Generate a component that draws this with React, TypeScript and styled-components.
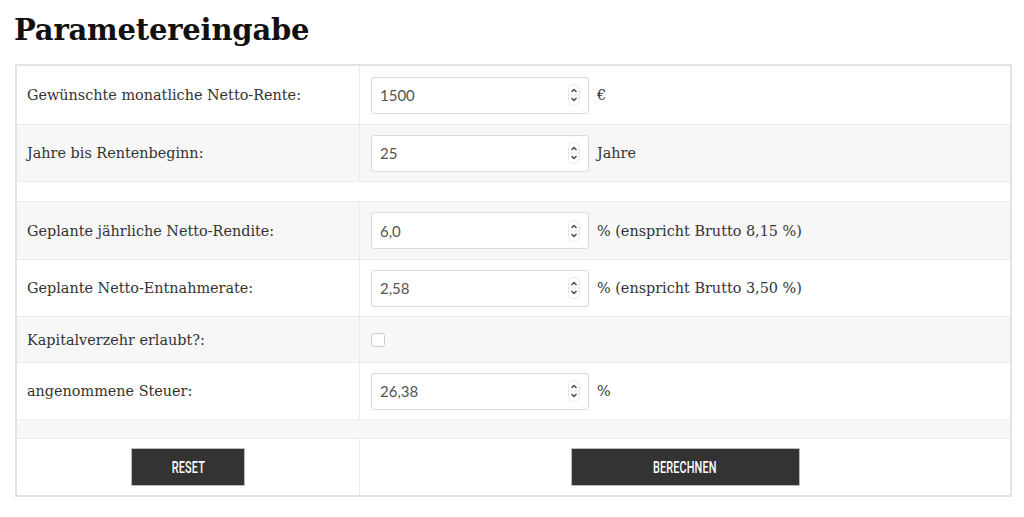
import React from 'react'
import styled, { createGlobalStyle } from 'styled-components'

const GlobalStyle = createGlobalStyle`
  body {
    margin: 0;
    background: #fff;
    font-family: "DejaVu Serif", serif;
  }
`

const Page = styled.div`
  padding: 8px 12px 20px 15px;
`

const Title = styled.h1`
  margin: 0 0 12px -1px;
  font-family: "DejaVu Serif", serif;
  font-weight: bold;
  font-size: 29px;
  line-height: 44px;
  color: #111;
  letter-spacing: -0.2px;
`

const Table = styled.div`
  border: 2px solid #e3e3e3;
  display: flex;
  flex-direction: column;
`

const Row = styled.div<{ $shade?: boolean; $height: number }>`
  box-sizing: border-box;
  display: grid;
  grid-template-columns: 343px 1fr;
  height: ${(p) => p.$height}px;
  background: ${(p) => (p.$shade ? '#f7f7f7' : '#fff')};
  border-top: 1px solid #ececec;
  &:first-child {
    border-top: none;
  }
`

const LabelCell = styled.div<{ $center?: boolean }>`
  display: flex;
  align-items: center;
  justify-content: ${(p) => (p.$center ? 'center' : 'flex-start')};
  padding-left: ${(p) => (p.$center ? '0' : '10px')};
  border-right: 1px solid #ececec;
  font-size: 14.4px;
  color: #333;
`

const ValueCell = styled.div<{ $center?: boolean }>`
  display: flex;
  align-items: center;
  gap: 8px;
  justify-content: ${(p) => (p.$center ? 'center' : 'flex-start')};
  padding-left: ${(p) => (p.$center ? '0' : '11px')};
`

const Field = styled.div`
  width: 218px;
  height: 37px;
  box-sizing: border-box;
  border: 1px solid #dadada;
  border-radius: 3px;
  background: #fff;
  display: flex;
  align-items: center;
  justify-content: space-between;
  padding: 0 8px 0 8px;
  font-family: Lato, "Open Sans", sans-serif;
  font-size: 15px;
  color: #555;
`

const Spinner = styled.svg`
  width: 12px;
  height: 22px;
`

const Unit = styled.span`
  font-size: 14.4px;
  color: #333;
`

const Check = styled.span`
  width: 12px;
  height: 12px;
  border: 1px solid #cfcfcf;
  border-radius: 3px;
  background: #fff;
`

const Button = styled.button<{ $width: number }>`
  width: ${(p) => p.$width}px;
  height: 38px;
  background: #333;
  border: 1px solid #bbb;
  color: #fff;
  cursor: pointer;
  display: flex;
  align-items: center;
  justify-content: center;
  padding: 0;
`

const ButtonText = styled.span`
  display: inline-block;
  font-family: Roboto, sans-serif;
  font-weight: 500;
  font-size: 16px;
  letter-spacing: 0.2px;
  text-transform: uppercase;
  transform: scaleX(0.68);
`

function SpinIcon() {
  return (
    <Spinner viewBox="0 0 12 22">
      <rect x="0.5" y="0.5" width="11" height="21" rx="5" fill="#fff" stroke="#e6e6e6" />
      <line x1="1" y1="11" x2="11" y2="11" stroke="#e6e6e6" />
      <path d="M3.5 8 L6 5.5 L8.5 8" fill="none" stroke="#444" strokeWidth="1.4" />
      <path d="M3.5 14 L6 16.5 L8.5 14" fill="none" stroke="#444" strokeWidth="1.4" />
    </Spinner>
  )
}

function NumberField({ value }: { value: string }) {
  return (
    <Field>
      <span>{value}</span>
      <SpinIcon />
    </Field>
  )
}

const rows = [
  { label: 'Gewünschte monatliche Netto-Rente:', value: '1500', unit: '€', h: 58 },
  { label: 'Jahre bis Rentenbeginn:', value: '25', unit: 'Jahre', h: 57 },
]

const rows2 = [
  { label: 'Geplante jährliche Netto-Rendite:', value: '6,0', unit: '% (enspricht Brutto 8,15 %)', h: 58 },
  { label: 'Geplante Netto-Entnahmerate:', value: '2,58', unit: '% (enspricht Brutto 3,50 %)', h: 57 },
]

export default function App() {
  return (
    <>
      <GlobalStyle />
      <Page>
        <Title>Parametereingabe</Title>
        <Table>
          {rows.map((r, i) => (
            <Row key={r.label} $height={r.h} $shade={i % 2 === 1}>
              <LabelCell>{r.label}</LabelCell>
              <ValueCell>
                <NumberField value={r.value} />
                <Unit>{r.unit}</Unit>
              </ValueCell>
            </Row>
          ))}
          <Row $height={20} />
          {rows2.map((r, i) => (
            <Row key={r.label} $height={r.h} $shade={i % 2 === 0}>
              <LabelCell>{r.label}</LabelCell>
              <ValueCell>
                <NumberField value={r.value} />
                <Unit>{r.unit}</Unit>
              </ValueCell>
            </Row>
          ))}
          <Row $height={46} $shade>
            <LabelCell>Kapitalverzehr erlaubt?:</LabelCell>
            <ValueCell>
              <Check />
            </ValueCell>
          </Row>
          <Row $height={57}>
            <LabelCell>angenommene Steuer:</LabelCell>
            <ValueCell>
              <NumberField value="26,38" />
              <Unit>%</Unit>
            </ValueCell>
          </Row>
          <Row $height={19} $shade />
          <Row $height={57}>
            <LabelCell $center>
              <Button $width={114}>
                <ButtonText>Reset</ButtonText>
              </Button>
            </LabelCell>
            <ValueCell $center>
              <Button $width={229}>
                <ButtonText>Berechnen</ButtonText>
              </Button>
            </ValueCell>
          </Row>
        </Table>
      </Page>
    </>
  )
}
